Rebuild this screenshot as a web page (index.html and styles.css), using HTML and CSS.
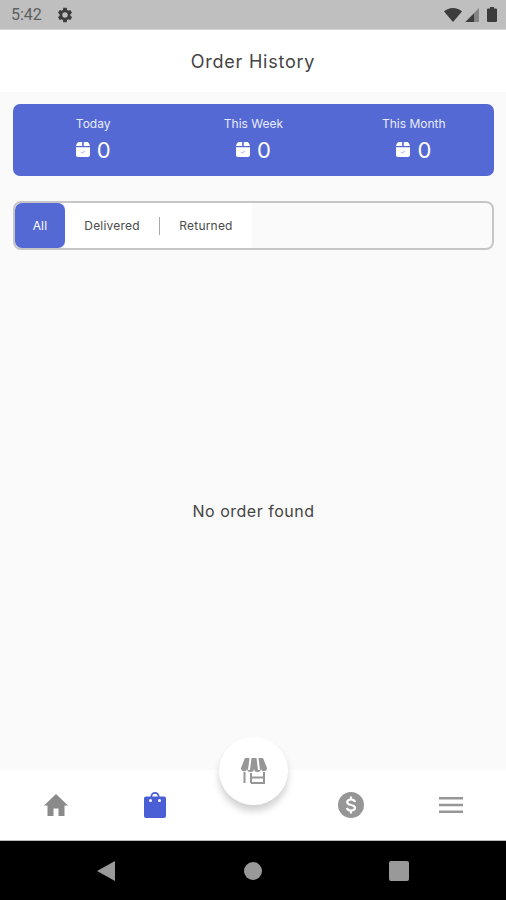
FILE: index.html
```html
<!DOCTYPE html>
<html lang="en">
<head>
    <meta charset="UTF-8">
    <meta name="viewport" content="width=device-width, initial-scale=1.0">
    <title>Order History</title>
    <link rel="stylesheet" href="styles.css">
</head>
<body>
    <div class="status-bar">
        <div class="status-left">
            <span class="status-time">5:42</span>
            <svg class="status-gear" viewBox="0 0 24 24"><path d="M19.14 12.94c.04-.3.06-.61.06-.94s-.02-.64-.07-.94l2.03-1.58a.49.49 0 0 0 .12-.61l-1.92-3.32a.49.49 0 0 0-.59-.22l-2.39.96c-.5-.38-1.03-.7-1.62-.94l-.36-2.54a.48.48 0 0 0-.48-.41h-3.84c-.24 0-.43.17-.47.41l-.36 2.54c-.59.24-1.13.57-1.62.94l-2.39-.96a.48.48 0 0 0-.59.22L2.74 8.87c-.12.21-.08.47.12.61l2.03 1.58c-.05.3-.07.62-.07.94s.02.64.07.94l-2.03 1.58a.49.49 0 0 0-.12.61l1.92 3.32c.12.22.37.29.59.22l2.39-.96c.5.38 1.03.7 1.62.94l.36 2.54c.05.24.24.41.48.41h3.84c.24 0 .44-.17.47-.41l.36-2.54c.59-.24 1.13-.56 1.62-.94l2.39.96c.22.08.47 0 .59-.22l1.92-3.32a.49.49 0 0 0-.12-.61l-2.01-1.58zM12 15.6A3.6 3.6 0 1 1 12 8.4a3.6 3.6 0 0 1 0 7.2z"/></svg>
        </div>
        <div class="status-right">
            <svg class="status-wifi" viewBox="0 0 18 14"><path d="M0 3.600C2.400 1.400 5.500 0 9 0s6.600 1.400 9 3.600L9 14z"/></svg>
            <svg class="status-signal" viewBox="0 0 14 14"><path d="M14 0v14H0z" opacity=".45"/><path d="M9 5.500V14H0.500z"/></svg>
            <svg class="status-battery" viewBox="0 0 10 15"><path d="M3 0h4v1.500h2a1 1 0 0 1 1 1V14a1 1 0 0 1-1 1H1a1 1 0 0 1-1-1V2.500a1 1 0 0 1 1-1h2z"/></svg>
        </div>
    </div>

    <header class="app-bar">Order History</header>

    <main class="content">
        <div class="stats-card">
            <div class="stat">
                <div class="stat-label">Today</div>
                <div class="stat-value">
                    <svg class="box-icon" viewBox="0 0 14 15"><path d="M2.500 0h3.700v4H0.100C.3 2.500 1 .6 2.500 0zM7.800 0h3.700c1.500.6 2.200 2.500 2.400 4H7.800zM0 5.200h14V13a2 2 0 0 1-2 2H2a2 2 0 0 1-2-2z"/><path class="box-tick" d="M5.500 10l1 1L8.500 9"/></svg>
                    <span>0</span>
                </div>
            </div>
            <div class="stat">
                <div class="stat-label">This Week</div>
                <div class="stat-value">
                    <svg class="box-icon" viewBox="0 0 14 15"><path d="M2.500 0h3.700v4H0.100C.3 2.500 1 .6 2.500 0zM7.800 0h3.700c1.500.6 2.200 2.500 2.400 4H7.800zM0 5.200h14V13a2 2 0 0 1-2 2H2a2 2 0 0 1-2-2z"/><path class="box-tick" d="M5.500 10l1 1L8.500 9"/></svg>
                    <span>0</span>
                </div>
            </div>
            <div class="stat">
                <div class="stat-label">This Month</div>
                <div class="stat-value">
                    <svg class="box-icon" viewBox="0 0 14 15"><path d="M2.500 0h3.700v4H0.100C.3 2.500 1 .6 2.500 0zM7.800 0h3.700c1.500.6 2.200 2.500 2.400 4H7.800zM0 5.200h14V13a2 2 0 0 1-2 2H2a2 2 0 0 1-2-2z"/><path class="box-tick" d="M5.500 10l1 1L8.500 9"/></svg>
                    <span>0</span>
                </div>
            </div>
        </div>

        <div class="tabs">
            <div class="tab tab-active">All</div>
            <div class="tab tab-delivered">Delivered</div>
            <div class="tab-divider"></div>
            <div class="tab tab-returned">Returned</div>
        </div>

        <div class="empty">No order found</div>
    </main>

    <nav class="bottom-nav">
        <div class="nav-item">
            <svg class="nav-home" viewBox="0 0 24 22"><path d="M9.500 22v-7.500h5V22h6V11.500H24L12 0 0 11.500h3.500V22z"/></svg>
        </div>
        <div class="nav-item">
            <svg class="nav-bag" viewBox="0 0 22 26"><path d="M6.500 4.500a4.500 4.500 0 0 1 9 0h4.500a2 2 0 0 1 2 2V24a2 2 0 0 1-2 2H2a2 2 0 0 1-2-2V6.500a2 2 0 0 1 2-2zM8.300 4.500h5.400a2.700 2.700 0 0 0-5.400 0z"/><circle class="bag-dot" cx="6.500" cy="8.500" r="1.500"/><circle class="bag-dot" cx="15.500" cy="8.500" r="1.500"/></svg>
        </div>
        <div class="nav-item"></div>
        <div class="nav-item">
            <svg class="nav-dollar" viewBox="0 0 26 26"><circle cx="13" cy="13" r="13"/><path class="dollar-s" d="M17 10C16.500 8.300 15 7.500 13 7.500c-2.300 0-3.800 1-3.800 2.700 0 3.800 7.800 1.800 7.800 5.600 0 1.700-1.700 2.700-4 2.700-2.100 0-3.700-.9-4.200-2.600M13 4.500v3M13 18.500v3"/></svg>
        </div>
        <div class="nav-item">
            <svg class="nav-menu" viewBox="0 0 24 16"><path d="M0 0h24v2.600H0zM0 6.700h24v2.600H0zM0 13.400h24V16H0z"/></svg>
        </div>
        <button class="fab">
            <svg class="fab-store" viewBox="0 0 26 26"><path d="M4 0h18l4 10a3 3 0 0 1-6 .6 3.500 3.500 0 0 1-7 0 3.500 3.500 0 0 1-7 0 3 3 0 0 1-6-.6z"/><path class="store-stripe" d="M9.500 0L8 12M16.500 0L18 12"/><path class="store-base" d="M3.500 14v11M10 25h13V14M10 15v10M10 19.500h13"/></svg>
        </button>
    </nav>

    <div class="system-nav">
        <div class="sys-back"></div>
        <div class="sys-home"></div>
        <div class="sys-recent"></div>
    </div>
</body>
</html>
```

FILE: styles.css
```css
* {
    box-sizing: border-box;
}

body {
    font-family: Inter, "Liberation Sans", sans-serif;
    margin: 0;
    padding: 0;
    display: flex;
    flex-direction: column;
    height: 100vh;
    background: #fafafa;
    color: #333;
    overflow: hidden;
}

.status-bar {
    height: 30px;
    flex: none;
    display: flex;
    justify-content: space-between;
    align-items: center;
    padding: 0 9px 0 11px;
    background: #bfbfbf;
    border-bottom: 1px solid #d4d4d4;
    color: #444;
}

.status-left,
.status-right {
    display: flex;
    align-items: center;
}

.status-time {
    font-family: Roboto, sans-serif;
    font-size: 16px;
    color: #5e5e5e;
}

.status-gear {
    width: 18px;
    height: 18px;
    margin-left: 14px;
    fill: #3c3c3c;
}

.status-right svg {
    fill: #3c3c3c;
}

.status-wifi {
    width: 18px;
    height: 14px;
}

.status-signal {
    width: 14px;
    height: 14px;
    margin-left: 3px;
}

.status-battery {
    width: 10px;
    height: 15px;
    margin-left: 8px;
}

.app-bar {
    height: 62px;
    flex: none;
    display: flex;
    justify-content: center;
    align-items: center;
    padding-top: 1px;
    background: #fff;
    font-size: 18px;
    letter-spacing: 0.75px;
    color: #444;
}

.content {
    flex: 1;
    display: flex;
    flex-direction: column;
    padding: 12px 12px 0 13px;
}

.stats-card {
    height: 72px;
    flex: none;
    display: grid;
    grid-template-columns: repeat(3, 1fr);
    align-items: center;
    background: #5469d4;
    border-radius: 7px;
    color: #fff;
}

.stat {
    padding-bottom: 1px;
    text-align: center;
}

.stat-label {
    font-size: 12px;
    line-height: 16px;
    color: #e8ebfa;
}

.stat-value {
    display: flex;
    justify-content: center;
    align-items: center;
    gap: 7px;
    margin-top: 4px;
    font-size: 22px;
    line-height: 28px;
}

.box-icon {
    width: 14px;
    height: 15px;
    fill: #fff;
}

.box-tick {
    fill: none;
    stroke: #8f9de3;
    stroke-width: 1;
}

.tabs {
    height: 49px;
    flex: none;
    display: flex;
    align-items: center;
    margin-top: 25px;
    border: 2px solid #c6c6c6;
    border-radius: 8px;
    background: #fafafa;
}

.tab {
    height: 45px;
    display: flex;
    justify-content: center;
    align-items: center;
    font-size: 12px;
    letter-spacing: 0.2px;
    color: #4a4a4a;
    background: #fff;
}

.tab-active {
    width: 50px;
    border-radius: 7px;
    background: #5469d4;
    color: #fff;
}

.tab-delivered {
    width: 94px;
}

.tab-divider {
    width: 1px;
    height: 45px;
    background: linear-gradient(#fff 14px, #aaa 14px, #aaa 32px, #fff 32px);
}

.tab-returned {
    width: 92px;
}

.empty {
    flex: 1;
    display: flex;
    justify-content: center;
    align-items: center;
    padding-top: 2px;
    font-size: 16px;
    letter-spacing: 0.5px;
    color: #444;
}

.bottom-nav {
    position: relative;
    height: 71px;
    flex: none;
    display: grid;
    grid-template-columns: repeat(5, 1fr);
    padding: 0 7px;
    background: #fff;
    border-bottom: 1px solid #bbb;
}

.nav-item {
    display: flex;
    justify-content: center;
    align-items: center;
    padding-bottom: 1px;
}

.nav-home {
    width: 24px;
    height: 22px;
    fill: #8a8a8a;
}

.nav-bag {
    width: 22px;
    height: 26px;
    fill: #4a5fd6;
}

.bag-dot {
    fill: #fff;
}

.nav-dollar {
    width: 26px;
    height: 26px;
    fill: #969696;
}

.dollar-s {
    fill: none;
    stroke: #fff;
    stroke-width: 2.2;
}

.nav-menu {
    width: 24px;
    height: 16px;
    margin-left: 2px;
    fill: #969696;
}

.fab {
    position: absolute;
    left: 219px;
    top: -33px;
    width: 69px;
    height: 68px;
    display: flex;
    justify-content: center;
    align-items: center;
    padding: 0;
    border: none;
    border-radius: 50%;
    background: #fff;
    box-shadow: 0 6px 7px rgba(0, 0, 0, 0.18);
}

.fab-store {
    width: 26px;
    height: 26px;
    fill: #969696;
}

.store-stripe {
    fill: none;
    stroke: #fff;
    stroke-width: 2;
}

.store-base {
    fill: none;
    stroke: #969696;
    stroke-width: 2;
}

.system-nav {
    height: 59px;
    flex: none;
    position: relative;
    display: grid;
    grid-template-columns: 212px 1fr 1fr;
    align-items: center;
    background: #000;
}

.sys-back {
    width: 0;
    height: 0;
    margin-left: 97px;
    border-top: 10px solid transparent;
    border-bottom: 10px solid transparent;
    border-right: 18px solid #999;
}

.sys-home {
    width: 18px;
    height: 18px;
    margin-left: 32px;
    border-radius: 50%;
    background: #999;
}

.sys-recent {
    width: 20px;
    height: 20px;
    margin-left: 30px;
    border-radius: 2px;
    background: #999;
}
```
